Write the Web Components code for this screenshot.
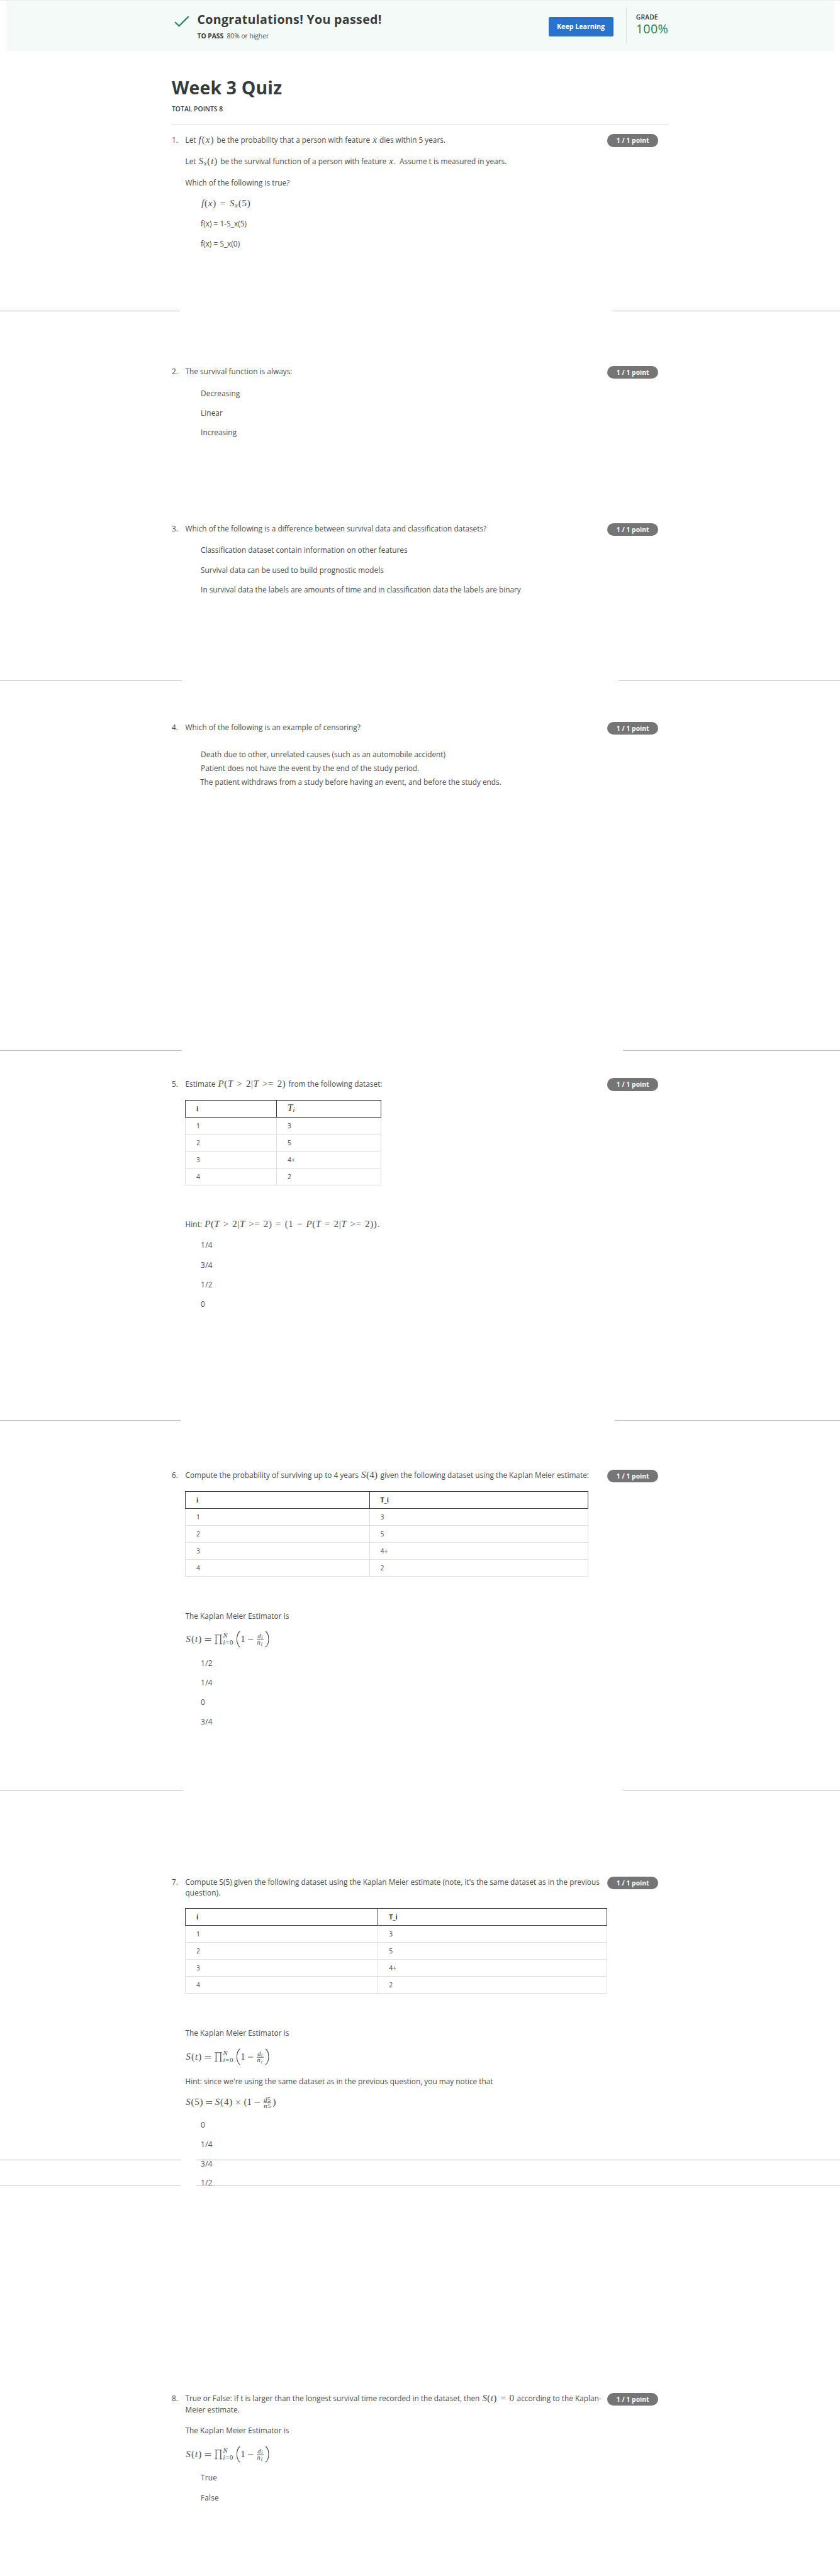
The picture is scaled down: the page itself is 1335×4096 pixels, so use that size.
<!DOCTYPE html>
<html lang="en">
<head>
<meta charset="utf-8">
<title>Week 3 Quiz</title>
<style>
html,body{margin:0;background:#fff}
body{height:4096px;overflow:hidden;font-family:"Open Sans","Noto Sans",sans-serif;color:#4b4b4b}
</style>
</head>
<body>
<quiz-page></quiz-page>
<script>
/* --g is the gap above one block; nested blocks must not pick it up. */
CSS.registerProperty({name:'--g', syntax:'<length>', inherits:false, initialValue:'0px'});

const shadow = (el, html) => { const r = el.attachShadow({mode:'open'}); r.innerHTML = html; return r; };

/* Spreads the glyphs of a run evenly so that it takes its typeset measure. */
const fit = (box, target, count) => {
  box.style.letterSpacing = '0px';
  const natural = box.getBoundingClientRect().width;
  box.style.letterSpacing = ((target - natural) / count) + 'px';
};

/* Inline formula: letters stay italic, digits, brackets and relations are upright, _x is a subscript. */
const math = (w, src) => `<math-text${w ? ` w="${w}"` : ''}>` +
  src.replace(/_(\w)|([()|\d]+|>=|[>=−])/g, (_, sub, up) => sub ? `<sub>${sub}</sub>` : `<b>${up.replace('>', '&gt;')}</b>`) + '</math-text>';

class MathText extends HTMLElement {
  connectedCallback() {
    if (this.shadowRoot) return;
    const r = shadow(this, `<style>
      :host{display:inline;line-height:0;margin:0 1px}
      span{font:italic 15px "Liberation Serif",serif;line-height:0;white-space:pre;word-spacing:1.3px}
      ::slotted(b){font-weight:400;font-style:normal}
      ::slotted(sub){font-size:10.3px;line-height:0;vertical-align:-2px}
    </style><span><slot></slot></span>`);
    if (this.hasAttribute('w')) fit(r.querySelector('span'), +this.getAttribute('w'), this.textContent.length);
  }
}
customElements.define('math-text', MathText);

class TextRow extends HTMLElement {
  connectedCallback() {
    if (this.shadowRoot) return;
    const r = shadow(this, `<style>
      :host{display:block;height:var(--h,16px);line-height:var(--h,16px);font-size:var(--f,11.8px);margin-top:var(--g);white-space:nowrap}
      :host([option]){padding-left:24.6px}
      span{display:inline-block;height:var(--h,16px);vertical-align:top;white-space:pre}
    </style><span><slot></slot></span>`);
    let n = this.textContent.length;
    this.querySelectorAll('math-text').forEach(m => {
      customElements.upgrade(m);
      m.connectedCallback();
      n -= m.textContent.length;
    });
    if (this.hasAttribute('w')) fit(r.querySelector('span'), +this.getAttribute('w') + 1.2, n);
  }
}
customElements.define('text-row', TextRow);

class PointBadge extends HTMLElement {
  connectedCallback() {
    if (this.shadowRoot) return;
    shadow(this, `<style>
      :host{display:flex;justify-content:center;align-items:center;width:81px;height:20.2px;margin-top:-.2px;border-radius:10.1px;background:#757575;color:#fff;font-weight:700;flex:none}
      text-row{--f:10.3px}
    </style><text-row w="50.6">1 / 1 point</text-row>`);
  }
}
customElements.define('point-badge', PointBadge);

class PageRule extends HTMLElement {
  connectedCallback() {
    if (this.shadowRoot) return;
    shadow(this, `<style>
      :host{display:flex;justify-content:space-between;height:1px;margin-top:var(--g)}
      i{background:#b8b8b8}
      .l{width:var(--l)}
      .r{width:calc(1335px - var(--r))}
    </style><i class="l"></i><i class="r"></i>`);
  }
}
customElements.define('page-rule', PageRule);

class DataTable extends HTMLElement {
  connectedCallback() {
    if (this.shadowRoot) return;
    const rows = [['1','3'],['2','5'],['3','4+'],['4','2']];
    shadow(this, `<style>
      :host{display:grid;grid-template-columns:var(--a) var(--b);grid-template-rows:28.1px repeat(4,27.05px);width:max-content;margin:var(--g) 0 0 -.5px;font-size:10.4px}
      div{box-sizing:border-box;display:flex;align-items:center;padding-left:17px;border:solid #ddd;border-width:0 1px 1px 0}
      div.s{border-left-width:1px}
      div.h{border-color:#333;border-top-width:1px;font-weight:700;color:#333}
      ::slotted(math-text){margin:0}
    </style><div class="h s">i</div><div class="h"><slot>T_i</slot></div>` +
    rows.map(([a,b]) => `<div class="s">${a}</div><div>${b}</div>`).join(''));
  }
}
customElements.define('data-table', DataTable);

const formulaStyle = `<style>
  :host{display:block;height:16px;margin-top:var(--g)}
  svg{display:block;overflow:visible;fill:currentColor}
  text{font:italic 15px "Liberation Serif",serif}
  .r{font-style:normal}
  .s{font-size:10.6px}
  .t{font-size:8.4px}
  path{fill:none;stroke:currentColor;stroke-width:.9}
</style>`;

class KaplanFormula extends HTMLElement {
  connectedCallback() {
    if (this.shadowRoot) return;
    shadow(this, formulaStyle + `<svg width="140" height="16" viewBox="0 -13 140 16">
      <text x="0.3" textLength="25">S<tspan class="r">(</tspan>t<tspan class="r">)</tspan></text>
      <path d="M30.7-5.4H40.4M30.7-2.4H40.4"/>
      <path d="M46.4-11.3H57.8M46.4 2.8H50.4M53.8 2.8H57.8"/><path style="stroke-width:1.3" d="M48.4-11.3V2.8M55.8-11.3V2.8"/>
      <text class="s" x="59.6" y="-7.4">N</text>
      <text class="s" x="59.4" y="4" textLength="15.8">i<tspan class="r">=0</tspan></text>
      <path style="stroke-width:1.1" d="M86.4-17.2C79.8-12 79.8 2.8 86.4 8M127-17.2C133.6-12 133.6 2.8 127 8"/>
      <text class="r" x="87.2">1</text>
      <path d="M99.2-4H107.4M113-3.8H124.2"/>
      <text class="s" x="114.2" y="-5.8">d<tspan class="t" dx=".6" dy=".8">i</tspan></text>
      <text class="s" x="113.6" y="4">n<tspan class="t" dx=".8" dy="1.8">i</tspan></text>
    </svg>`);
  }
}
customElements.define('kaplan-formula', KaplanFormula);

class StepFormula extends HTMLElement {
  connectedCallback() {
    if (this.shadowRoot) return;
    shadow(this, formulaStyle + `<svg width="150" height="16" viewBox="0 -13 150 16">
      <text x="0.3" textLength="27.2">S<tspan class="r">(5)</tspan></text>
      <path d="M32.4-5.4H42.1M32.4-2.4H42.1"/>
      <text x="46.8" textLength="27.4">S<tspan class="r">(4)</tspan></text>
      <path d="M80.2-7.3L86.6-.9M86.6-7.3L80.2-.9"/>
      <text class="r" x="92.4">(</text><text class="r" x="97.6">1</text>
      <path d="M109.6-4H118M123.8-3.8H136.2"/>
      <text class="s" x="124.2" y="-5.4">d<tspan class="r" dx=".4">5</tspan></text>
      <text class="s" x="124.2" y="5.2">n<tspan class="r" dx=".4">5</tspan></text>
      <text class="r" x="138.6">)</text>
    </svg>`);
  }
}
customElements.define('step-formula', StepFormula);

class QuizItem extends HTMLElement {
  connectedCallback() {
    if (this.shadowRoot) return;
    shadow(this, `<style>
      :host{display:flex;align-items:flex-start;margin:var(--g) 0 0 273px}
      .n{width:21.5px;flex:none}
      .b{width:670.7px;flex:none;display:flex;flex-direction:column}
    </style><div class="n"><text-row>${this.getAttribute('n')}.</text-row></div><div class="b"><slot></slot></div><point-badge></point-badge>`);
  }
}
customElements.define('quiz-item', QuizItem);

class ResultBanner extends HTMLElement {
  connectedCallback() {
    if (this.shadowRoot) return;
    shadow(this, `<style>
      :host{display:block;border-top:1px solid #e9eeed}
      .band{display:flex;align-items:flex-start;height:80px;margin:0 9px 0 10px;background:#f3faf8;color:#373a3c}
      svg{margin:23px 13px 0 266.5px;flex:none}
      .t{width:558px;padding-top:18px}
      .big{--f:19.6px;--h:24px;font-weight:700}
      .pass{display:flex;gap:5.3px;margin-top:6px}
      .pass text-row,.g{--f:10.3px}
      button{all:unset;box-sizing:border-box;width:103px;height:30.5px;margin-top:26px;border-radius:2px;background:#2a73cc;color:#fff;font-weight:700;display:flex;align-items:center;justify-content:center;--f:10.8px}
      hr{all:unset;width:1px;height:57px;margin:11px 15px 0 20.3px;background:#d9dfde}
      .grade{padding-top:17.6px}
      .g{font-weight:600}
      .p{--f:19.7px;--h:21px;color:#1f8354}
    </style><div class="band">
      <svg width="24" height="20" viewBox="0 0 24 20"><path d="M1.2 11.3L7.6 17.2L22.8 2" fill="none" stroke="#1f8354" stroke-width="2.1"/></svg>
      <div class="t"><text-row class="big" w="292">Congratulations! You passed!</text-row>
        <div class="pass"><text-row w="40.5" style="font-weight:700">TO PASS</text-row><text-row w="65.4" style="color:#4b4b4b">80% or higher</text-row></div></div>
      <button><text-row w="74.8">Keep Learning</text-row></button><hr>
      <div class="grade"><text-row class="g" w="33.8">GRADE</text-row><text-row class="p" w="50">100%</text-row></div>
    </div>`);
  }
}
customElements.define('result-banner', ResultBanner);

class QuizPage extends HTMLElement {
  connectedCallback() {
    if (this.shadowRoot) return;
    shadow(this, `<style>
      :host{display:flow-root;position:relative;isolation:isolate}
      header{width:789.5px;margin:40px 0 0 273px;height:76.5px;border-bottom:1px solid #dcdcdc;color:#373a3c;font-weight:700}
      .over{position:absolute;left:0;right:0;z-index:-1}
    </style>
    <result-banner></result-banner>
    <header><text-row w="174" style="--f:28.4px;--h:36px">Week 3 Quiz</text-row><text-row w="80" style="--f:10.3px;--g:8px;font-weight:600">TOTAL POINTS 8</text-row></header>

    <quiz-item n="1" style="--g:15px">
      <text-row w="412.3">Let ${math(24.8, 'f(x)')} be the probability that a person with feature ${math(6.7, 'x')} dies within 5 years.</text-row>
      <text-row w="509.5" style="--g:18.4px">Let ${math(30.5, 'S_x(t)')} be the survival function of a person with feature ${math(6.7, 'x')}.&nbsp; Assume t is measured in years.</text-row>
      <text-row w="164.7" style="--g:18.6px">Which of the following is true?</text-row>
      <text-row option style="--g:16.4px">${math(78.5, 'f(x) = S_x(5)')}</text-row>
      <text-row option w="71.8" style="--g:16.6px">f(x) = 1-S_x(5)</text-row>
      <text-row option w="60.9" style="--g:15.5px">f(x) = S_x(0)</text-row>
    </quiz-item>
    <page-rule style="--g:99.5px;--l:285px;--r:974px"></page-rule>

    <quiz-item n="2" style="--g:86.9px">
      <text-row w="168.8">The survival function is always:</text-row>
      <text-row option w="61" style="--g:18.2px">Decreasing</text-row>
      <text-row option w="33.6" style="--g:15.3px">Linear</text-row>
      <text-row option w="55.8" style="--g:15.1px">Increasing</text-row>
    </quiz-item>

    <quiz-item n="3" style="--g:137px">
      <text-row w="477.5">Which of the following is a difference between survival data and classification datasets?</text-row>
      <text-row option w="327.3" style="--g:18.4px">Classification dataset contain information on other features</text-row>
      <text-row option w="289.6" style="--g:15.3px">Survival data can be used to build prognostic models</text-row>
      <text-row option w="507.5" style="--g:15.3px">In survival data the labels are amounts of time and in classification data the labels are binary</text-row>
    </quiz-item>
    <page-rule style="--g:137px;--l:289px;--r:983px"></page-rule>

    <quiz-item n="4" style="--g:64.9px">
      <text-row w="277.2">Which of the following is an example of censoring?</text-row>
      <text-row option w="387.7" style="--g:27.1px">Death due to other, unrelated causes (such as an automobile accident)</text-row>
      <text-row option w="345.9" style="--g:6.4px">Patient does not have the event by the end of the study period.</text-row>
      <text-row option w="477.5" style="--g:5.5px;margin-left:-1px">The patient withdraws from a study before having an event, and before the study ends.</text-row>
    </quiz-item>
    <page-rule style="--g:419.6px;--l:289px;--r:990px"></page-rule>

    <quiz-item n="5" style="--g:43.2px">
      <text-row w="311.8">Estimate ${math(107.9, 'P(T > 2|T >= 2)')} from the following dataset:</text-row>
      <data-table style="--a:146.1px;--b:166.2px;--g:18px">${math(0, 'T_i')}</data-table>
      <text-row w="307.7" style="--g:53.4px">Hint: ${math(274, 'P(T > 2|T >= 2) = (1 − P(T = 2|T >= 2))')}.</text-row>
      <text-row option w="17.6" style="--g:17px">1/4</text-row>
      <text-row option w="17.6" style="--g:15.3px">3/4</text-row>
      <text-row option w="17.6" style="--g:15.3px">1/2</text-row>
      <text-row option style="--g:15.1px">0</text-row>
    </quiz-item>
    <page-rule style="--g:176.6px;--l:287px;--r:977px"></page-rule>

    <quiz-item n="6" style="--g:78.5px">
      <text-row w="640.2">Compute the probability of surviving up to 4 years ${math(26.3, 'S(4)')} given the following dataset using the Kaplan Meier estimate:</text-row>
      <data-table style="--a:293.5px;--b:347.2px;--g:18px"></data-table>
      <text-row w="163.7" style="--g:54px">The Kaplan Meier Estimator is</text-row>
      <kaplan-formula style="--g:21px"></kaplan-formula>
      <text-row option w="17.6" style="--g:21.3px">1/2</text-row>
      <text-row option w="17.6" style="--g:15px">1/4</text-row>
      <text-row option style="--g:15.1px">0</text-row>
      <text-row option w="17.6" style="--g:15.1px">3/4</text-row>
    </quiz-item>
    <page-rule style="--g:100.8px;--l:291px;--r:990px"></page-rule>

    <quiz-item n="7" style="--g:137.1px">
      <text-row w="657.2">Compute S(5) given the following dataset using the Kaplan Meier estimate (note, it's the same dataset as in the previous</text-row>
      <text-row w="54.7" style="--g:1.2px">question).</text-row>
      <data-table style="--a:307.2px;--b:363.7px;--g:17.2px"></data-table>
      <text-row w="163.7" style="--g:54px">The Kaplan Meier Estimator is</text-row>
      <kaplan-formula style="--g:21.6px"></kaplan-formula>
      <text-row w="487.9" style="--g:23.2px">Hint: since we're using the same dataset as in the previous question, you may notice that</text-row>
      <step-formula style="--g:17.3px"></step-formula>
      <text-row option style="--g:19.2px">0</text-row>
      <text-row option w="17.6" style="--g:15.2px">1/4</text-row>
      <text-row option w="17.6" style="--g:14.9px">3/4</text-row>
      <text-row option w="17.6" style="--g:14.5px">1/2</text-row>
    </quiz-item>
    <page-rule class="over" style="top:3434px;--l:288px;--r:311.5px"></page-rule>
    <page-rule class="over" style="top:3474px;--l:288px;--r:311.5px"></page-rule>

    <quiz-item n="8" style="--g:326.9px">
      <text-row w="659.8">True or False: If t is larger than the longest survival time recorded in the dataset, then ${math(51.1, 'S(t) = 0')} according to the Kaplan-</text-row>
      <text-row w="85.2" style="--g:1.6px">Meier estimate.</text-row>
      <text-row w="163.7" style="--g:17.7px">The Kaplan Meier Estimator is</text-row>
      <kaplan-formula style="--g:22px"></kaplan-formula>
      <text-row option w="24.8" style="--g:20.7px">True</text-row>
      <text-row option w="27.4" style="--g:15.7px">False</text-row>
    </quiz-item>`);
  }
}
customElements.define('quiz-page', QuizPage);
</script>
</body>
</html>
